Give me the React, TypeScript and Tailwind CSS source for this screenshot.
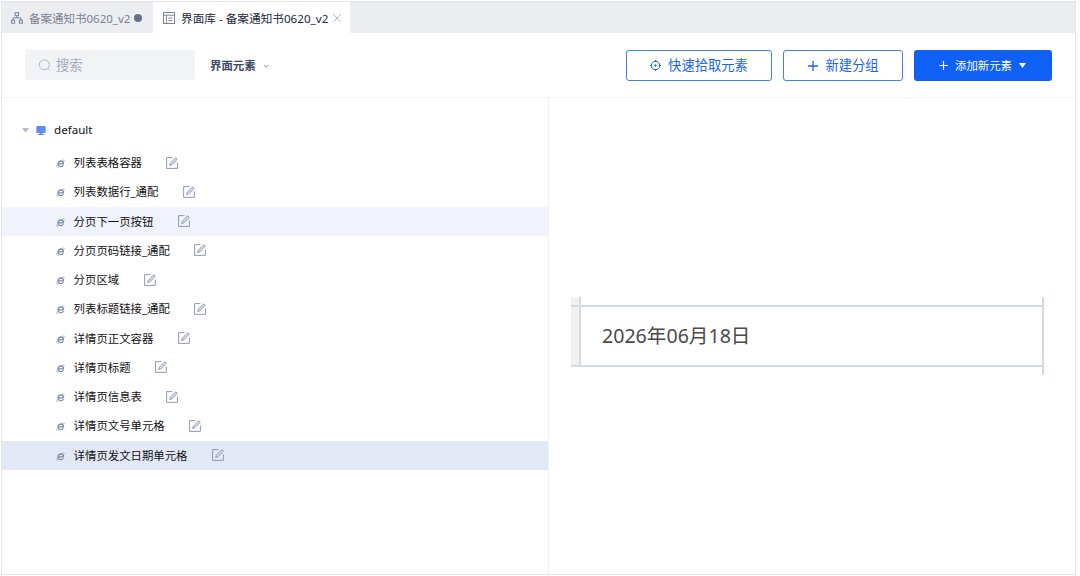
import React from 'react';

interface ElementItem {
  id: string;
  label: string;
  state?: 'hover' | 'selected';
}

const elements: ElementItem[] = [
  { id: 'list-table', label: '列表表格容器' },
  { id: 'list-row', label: '列表数据行_通配' },
  { id: 'next-page', label: '分页下一页按钮', state: 'hover' },
  { id: 'page-link', label: '分页页码链接_通配' },
  { id: 'page-area', label: '分页区域' },
  { id: 'title-link', label: '列表标题链接_通配' },
  { id: 'detail-body', label: '详情页正文容器' },
  { id: 'detail-title', label: '详情页标题' },
  { id: 'detail-info', label: '详情页信息表' },
  { id: 'detail-number', label: '详情页文号单元格' },
  { id: 'detail-date', label: '详情页发文日期单元格', state: 'selected' },
];

const FlowIcon = () => (
  <svg width="12" height="12" viewBox="0 0 12 12" fill="none" stroke="#7d849b" className="shrink-0">
    <rect x="4.2" y="0.7" width="3.4" height="3" />
    <rect x="0.6" y="8.2" width="3" height="3" />
    <rect x="8.4" y="8.2" width="3" height="3" />
    <path d="M5.9 3.7v2.2M2.1 8.2V5.9h7.8v2.3" />
  </svg>
);

const LibraryIcon = () => (
  <svg width="12" height="12" viewBox="0 0 12 12" fill="none" stroke="#7d849b" className="shrink-0">
    <rect x="0.5" y="0.5" width="11" height="11" />
    <path d="M0.5 3.2h11M3.4 3.2v8.3M5.5 6h3.8M5.5 8.6h3.8" />
  </svg>
);

const BrowserIcon = () => (
  <svg width="9" height="9" viewBox="0 0 9 9" fill="none" className="shrink-0">
    <path d="M7.3 6.2c-.5.9-1.300 1.400-2.400 1.400C3.200 7.600 2.100 6.500 2.100 4.900c0-1.700 1.200-2.900 2.800-2.900 1.700 0 2.700 1.100 2.600 2.900H2.600" stroke="#7f88a3" strokeWidth="1.3" />
    <path d="M1.900 5.200C.9 6.600.4 7.700.8 8.200c.3.3 1 .2 1.700-.2M6.200 1.300c.9-.5 1.700-.6 2-.2.2.3.1.8-.1 1.300" stroke="#a3aabd" strokeWidth="0.8" />
  </svg>
);

const EditIcon = () => (
  <svg width="12" height="12" viewBox="0 0 12 12" fill="none" stroke="#858da5" strokeWidth="0.9" className="shrink-0">
    <path d="M6.500.6H.6v10.800h10.800V5.500" />
    <path d="M3.700 8.500l.6-2.200L9.700.8l1.500 1.500-5.300 5.500z" fill="#dfe2ea" />
  </svg>
);

const PlusIcon = ({ size }: { size: number }) => (
  <svg width={size} height={size} viewBox="0 0 10 10" stroke="currentColor" strokeWidth="1.3" className="shrink-0">
    <path d="M5 0v10M0 5h10" />
  </svg>
);

const TabBar = () => (
  <div className="flex h-[31px] shrink-0 bg-[#ecedf1] leading-[31px]">
    <div className="flex w-[151px] items-center pt-px pl-[9px] text-[#7b8194]">
      <FlowIcon />
      <span className="ml-[6px] w-[102px] text-[11.5px] whitespace-nowrap">备案通知书0620_v2</span>
      <span className="ml-[3px] size-2 rounded-full bg-[#68718d]" />
    </div>
    <div className="flex w-[197px] items-center bg-white pt-px pl-[10px] text-[#22283a]">
      <LibraryIcon />
      <span className="ml-[6px] w-[148px] text-[11.65px] whitespace-nowrap">界面库 - 备案通知书0620_v2</span>
      <svg width="8" height="8" viewBox="0 0 8 8" stroke="#b3b8c5" className="ml-[4px] shrink-0">
        <path d="M0.300.3l7.400 7.400M7.700.3L.3 7.700" />
      </svg>
    </div>
  </div>
);

const Toolbar = () => (
  <div className="flex h-[65px] shrink-0 items-center border-b border-[#f2f2f4] pr-[23px] pl-[23px]">
    <div className="flex h-[30px] w-[170px] items-center rounded-[3px] bg-[#f2f3f7] pl-[13px] text-[13.3px] text-[#a3a9b9]">
      <svg width="13" height="13" viewBox="0 0 13 13" fill="none" stroke="#b0b5c3" className="mr-[5px]">
        <circle cx="6.300" cy="5.800" r="5" />
        <path d="M9.800 9.300l2 2" />
      </svg>
      <span className="pt-px">搜索</span>
    </div>
    <button className="ml-[15px] flex items-center pt-px font-semibold text-[#3d4663]">
      界面元素
      <svg width="6" height="5" viewBox="0 0 6 5" fill="none" stroke="#7d859b" className="mt-[3px] ml-[7px]">
        <path d="M0.800 1l2.200 2.200L5.200 1" />
      </svg>
    </button>
    <div className="ml-auto flex gap-[11px] text-[13.3px] text-[#1764f5]">
      <button className="flex h-[31px] w-[146px] items-center justify-center gap-[7px] rounded-[3px] border border-[#3f7ff7] pt-px">
        <svg width="11" height="11" viewBox="0 0 11 11" fill="none" stroke="currentColor" className="shrink-0">
          <circle cx="5.500" cy="5.500" r="4.200" />
          <path d="M5.500 0v2M5.500 9v2M0 5.500h2M9 5.500h2" />
          <circle cx="5.500" cy="5.500" r="0.900" fill="currentColor" strokeWidth="0.500" />
        </svg>
        快速拾取元素
      </button>
      <button className="flex h-[31px] w-[120px] items-center justify-center gap-[7px] rounded-[3px] border border-[#3f7ff7] pt-px pl-px">
        <PlusIcon size={10} />
        新建分组
      </button>
      <button className="flex h-[31px] w-[138px] items-center justify-center rounded-[3px] bg-[#0f60f6] pt-px pr-px text-[11.4px] text-white">
        <PlusIcon size={9} />
        <span className="ml-[7px]">添加新元素</span>
        <svg width="7" height="5" viewBox="0 0 7 5" fill="currentColor" className="ml-[7px]">
          <path d="M0 0h7L3.500 5z" />
        </svg>
      </button>
    </div>
  </div>
);

const ElementTree = () => (
  <div className="w-[546.5px] shrink-0 border-r border-[#f1f1f3] pt-[16px] text-[#111111]">
    <div className="flex h-[34px] items-center pb-[2px] pl-[20px]">
      <svg width="7" height="5" viewBox="0 0 7 5" fill="#b5bac8">
        <path d="M0 0h7L3.500 4.500z" />
      </svg>
      <svg width="10" height="9" viewBox="0 0 10 9" fill="#628bfa" className="ml-[7px]">
        <path d="M1.200 0h7.600q.9 0 .9.9v5.200q0 .9-.9.9H6.500v1h1.300v.9H2.200V8h1.300V7H1.200q-.9 0-.9-.9V.9q0-.9.9-.9z" />
      </svg>
      <span className="ml-[8px] text-[11.6px]">default</span>
    </div>
    {elements.map((item) => (
      <div
        key={item.id}
        className={`flex h-[29.25px] items-center pl-[54px] ${
          item.state === 'selected' ? 'bg-[#e3e8f6]' : item.state === 'hover' ? 'bg-[#f0f3fb]' : ''
        }`}
      >
        <div className="mt-[2px]">
          <BrowserIcon />
        </div>
        <span className="ml-[8.6px] whitespace-nowrap">{item.label}</span>
        <div className="ml-[24.4px]">
          <EditIcon />
        </div>
      </div>
    ))}
  </div>
);

const Preview = () => (
  <div className="flex flex-1 items-start pt-[199px] pl-[22.5px]">
    <div className="flex h-[78px] w-[473px] border-r-2 border-[#d2dae3]">
      <div className="flex h-[70px] w-[10px] flex-col border-r-2 border-b-2 border-[#d2dae3] bg-[#f1f1f1]">
        <div className="h-[10px] border-b-2 border-[#d2dae3]" />
      </div>
      <div className="mt-[8px] flex h-[62px] flex-1 items-center border-y-2 border-[#d2dae3] pl-[21px] text-[19.6px] text-[#4a4a4a]">
        2026年06月18日
      </div>
    </div>
  </div>
);

export default function App() {
  return (
    <div className="h-[576px] w-[1080px] overflow-hidden bg-white pt-px pl-px font-['Noto_Sans','Noto_Sans_CJK_SC',sans-serif] text-[11.4px]">
      <div className="flex h-[574px] w-[1075px] flex-col border border-[#e6e6e9]">
        <TabBar />
        <Toolbar />
        <div className="flex min-h-0 flex-1">
          <ElementTree />
          <Preview />
        </div>
      </div>
    </div>
  );
}
